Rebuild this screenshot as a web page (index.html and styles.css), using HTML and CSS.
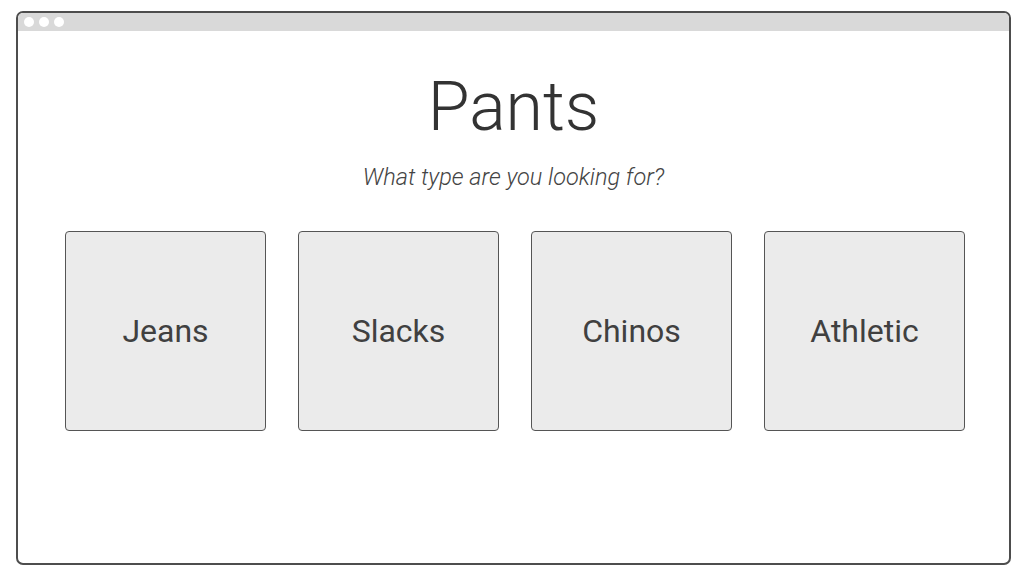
FILE: index.html
```html
<!DOCTYPE html>
<html lang="en">
<head>
<meta charset="UTF-8">
<meta name="viewport" content="width=device-width, initial-scale=1.0">
<title>Pants</title>
<link rel="stylesheet" href="styles.css">
</head>
<body>
<div class="window">
  <div class="titlebar">
    <span class="dot"></span>
    <span class="dot"></span>
    <span class="dot"></span>
  </div>

  <div class="content">
    <h1 class="title">Pants</h1>
    <p class="subtitle">What type are you looking for?</p>

    <div class="choices">
      <a class="choice" href="#">Jeans</a>
      <a class="choice" href="#">Slacks</a>
      <a class="choice" href="#">Chinos</a>
      <a class="choice" href="#">Athletic</a>
    </div>
  </div>
</div>
</body>
</html>
```

FILE: styles.css
```css
body {
  margin: 0;
  padding: 11px 13px 11px 16px;
  background-color: white;
  font-family: Roboto, "Liberation Sans", sans-serif;
  color: #333;
}

.window {
  height: 554px;
  box-sizing: border-box;
  border: 2px solid #4d4d4d;
  border-radius: 7px;
  overflow: hidden;
}

.titlebar {
  display: flex;
  align-items: center;
  gap: 5px;
  height: 18px;
  padding-left: 6px;
  background-color: #d9d9d9;
}

.dot {
  width: 10px;
  height: 10px;
  border-radius: 50%;
  background-color: white;
}

.content {
  display: flex;
  flex-direction: column;
  align-items: center;
}

.title {
  margin: 36px 0 0;
  font-size: 68px;
  font-weight: 300;
  line-height: normal;
  color: #333;
}

.subtitle {
  margin: 16px 0 0;
  font-size: 23.5px;
  font-weight: 300;
  font-style: italic;
  color: #444;
}

.choices {
  display: flex;
  gap: 32px;
  margin: 40px 0 0 3px;
}

.choice {
  display: flex;
  align-items: center;
  justify-content: center;
  width: 201px;
  height: 200px;
  box-sizing: border-box;
  border: 1.5px solid #555;
  border-radius: 4px;
  background-color: #ebebeb;
  font-size: 32px;
  color: #404040;
  text-decoration: none;
}
```
